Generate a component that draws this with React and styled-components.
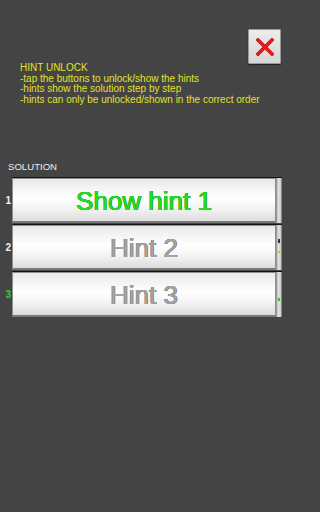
import styled, { createGlobalStyle } from "styled-components";

const GlobalStyle = createGlobalStyle`
  html, body {
    margin: 0;
    padding: 0;
    background: #444444;
  }
  body {
    font-family: "Liberation Sans", Arial, sans-serif;
  }
`;

const Page = styled.div`
  width: 288px;
  height: 512px;
  background: #444444;
  overflow: hidden;
`;

const Top = styled.div`
  display: flex;
  justify-content: flex-end;
  padding: 29px 7px 0 0;
`;

const CloseButton = styled.button`
  width: 33px;
  height: 35px;
  padding: 0;
  display: flex;
  align-items: center;
  justify-content: center;
  background: linear-gradient(#ececec, #d6d6d6);
  border: 1px solid #9a9a9a;
  border-radius: 1px;
  box-shadow: 0 1px 1px #222;
  cursor: pointer;
`;

const Info = styled.div`
  margin: -1px 0 0 20px;
  color: #e2e22a;
  font-size: 10px;
  line-height: 10.7px;
`;

const Label = styled.div`
  margin: 55px 0 0 8px;
  color: #eeeeee;
  font-size: 9.6px;
  line-height: 11px;
`;

const List = styled.div`
  display: flex;
  flex-direction: column;
  margin-top: 4px;
`;

const Row = styled.div`
  display: flex;
  align-items: stretch;
  height: 45px;
  margin-top: 2px;
`;

const Num = styled.div`
  width: 12px;
  display: flex;
  align-items: center;
  justify-content: flex-end;
  padding-right: 1px;
  box-sizing: border-box;
  font-size: 10px;
  font-weight: bold;
  color: ${(p) => (p.$active ? "#22dd22" : "#f2f2f2")};
`;

const HintButton = styled.button`
  width: 264px;
  height: 45px;
  box-sizing: border-box;
  padding: 3px 0 0;
  display: flex;
  align-items: center;
  justify-content: center;
  background: linear-gradient(#e9e9e9 0%, #ffffff 45%, #f4f4f4 70%, #dcdcdc 100%);
  border: 1px solid #8e8e8e;
  border-bottom: 2px solid #7a7a7a;
  box-shadow: 0 -1px 0 #151515;
  font-family: "Liberation Sans", Arial, sans-serif;
  font-size: 26px;
  line-height: 26px;
  color: ${(p) => (p.$enabled ? "#1fe01f" : "#a4a4a4")};
  text-shadow: ${(p) =>
    p.$enabled
      ? "0.45px 0 0 #189c18, -0.45px 0 0 #189c18, 0 0.45px 0 #189c18, 0 -0.45px 0 #189c18"
      : "0.45px 0 0 #737373, -0.45px 0 0 #737373, 0 0.45px 0 #737373, 0 -0.45px 0 #737373"};
  cursor: pointer;
`;

const Strip = styled.div`
  position: relative;
  width: 6px;
  box-sizing: border-box;
  background: linear-gradient(90deg, #bdbdbd, #e2e2e2 40%, #c9c9c9);
  border-left: 1px solid #9a9a9a;
  border-right: 1px solid #8a8a8a;
  box-shadow: 0 -1px 0 #151515;
`;

const Mark = styled.span`
  position: absolute;
  left: 1px;
  top: ${(p) => p.$top}px;
  width: 2px;
  height: ${(p) => p.$h}px;
  background: ${(p) => p.$color};
`;

const hints = [
  { n: 1, label: "Show hint 1", enabled: true, marks: [] },
  {
    n: 2,
    label: "Hint 2",
    enabled: false,
    marks: [
      { top: 14, h: 4, color: "#333" },
      { top: 26, h: 2, color: "#c8c800" },
    ],
  },
  { n: 3, label: "Hint 3", enabled: false, active: true, marks: [{ top: 26, h: 3, color: "#22cc22" }] },
];

function CloseIcon() {
  return (
    <svg width="18" height="18" viewBox="0 0 18 18">
      <path d="M2 2 L16 16 M16 2 L2 16" stroke="#c01212" strokeWidth="3.6" strokeLinecap="square" />
      <path d="M2 2 L16 16 M16 2 L2 16" stroke="#ee1a1a" strokeWidth="2.4" strokeLinecap="square" />
    </svg>
  );
}

export default function App() {
  return (
    <Page>
      <GlobalStyle />
      <Top>
        <CloseButton aria-label="close">
          <CloseIcon />
        </CloseButton>
      </Top>
      <Info>
        HINT UNLOCK
        <br />
        -tap the buttons to unlock/show the hints
        <br />
        -hints show the solution step by step
        <br />
        -hints can only be unlocked/shown in the correct order
      </Info>
      <Label>SOLUTION</Label>
      <List>
        {hints.map((h) => (
          <Row key={h.n}>
            <Num $active={h.active}>{h.n}</Num>
            <HintButton $enabled={h.enabled}>{h.label}</HintButton>
            <Strip>
              {h.marks.map((m, i) => (
                <Mark key={i} $top={m.top} $h={m.h} $color={m.color} />
              ))}
            </Strip>
          </Row>
        ))}
      </List>
    </Page>
  );
}
